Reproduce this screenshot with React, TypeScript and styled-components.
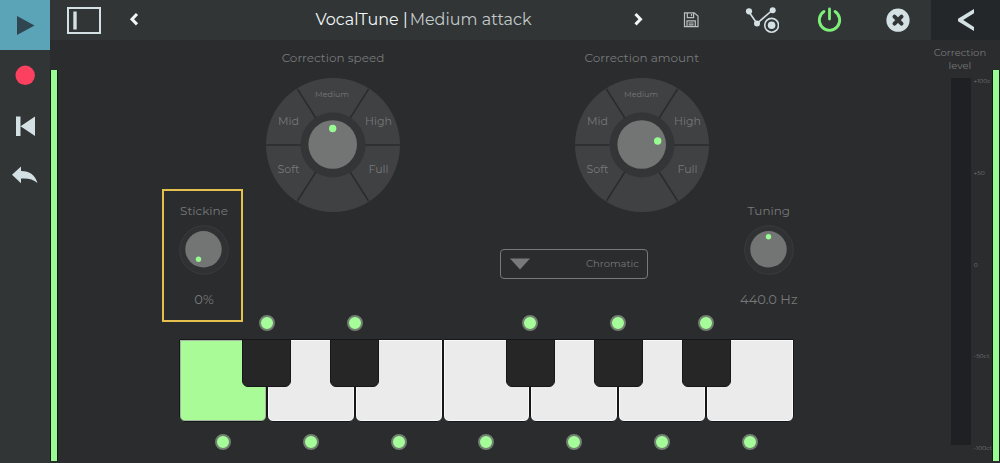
import React, { useState } from "react";
import styled, { createGlobalStyle } from "styled-components";

const GlobalStyle = createGlobalStyle`
  * { box-sizing: border-box; }
  body {
    margin: 0;
    background: #2b2c2e;
    color: #77797a;
    font-family: Montserrat, Inter, "Liberation Sans", sans-serif;
    font-size: 12px;
    line-height: 16px;
  }
  button, select, input { font: inherit; color: inherit; margin: 0; }
`;

const green = "#98fc92";
const pale = "#d3e0e4";

const Shell = styled.div`
  display: flex;
  min-height: 100vh;
`;

const Transport = styled.nav`
  display: flex;
  flex-direction: column;
  flex: 0 0 50px;
  background: #313536;
`;

const TransportButton = styled.button<{ $active?: boolean }>`
  display: flex;
  align-items: center;
  justify-content: center;
  height: 50px;
  padding: 0;
  border: 0;
  background: ${(p) => (p.$active ? "#5ba3b6" : "transparent")};
`;

const Device = styled.div`
  display: flex;
  flex: 1;
  flex-direction: column;
  min-width: 0;
`;

const Toolbar = styled.header`
  display: flex;
  height: 40px;
  background: #313536;
`;

const ToolButton = styled.button<{ $width: number; $dark?: boolean }>`
  display: flex;
  flex: 0 0 ${(p) => p.$width}px;
  align-items: center;
  justify-content: center;
  padding: 0;
  border: 0;
  background: ${(p) => (p.$dark ? "#242729" : "transparent")};
`;

const Title = styled.h1`
  flex: 1;
  margin: 0;
  padding-left: 75px;
  color: #c3cacb;
  font-size: 16px;
  font-weight: 400;
  line-height: 40px;
  text-align: center;
  white-space: nowrap;
`;

const PluginName = styled.span`
  margin-right: 2px;
  color: #f1f7f7;
`;

const Body = styled.div`
  display: flex;
  flex: 1;
`;

const MeterSlot = styled.div`
  display: flex;
  flex: 0 0 8px;
  padding: 30px 0 2px;
`;

const MeterBar = styled.div`
  flex: 1;
  border: solid #151617;
  border-width: 0 1px;
  background: ${green};
`;

const Panel = styled.main`
  display: flex;
  flex: 1;
  flex-direction: column;
  min-width: 0;
`;

const Controls = styled.section`
  display: flex;
  padding: 10px 107px 0 104px;
`;

const Middle = styled.div`
  display: flex;
  flex: 1;
  flex-direction: column;
  padding-bottom: 43px;
`;

const Dials = styled.div`
  display: flex;
  justify-content: space-between;
  padding: 0 18px 0 23px;
`;

const DialGroup = styled.div`
  display: flex;
  flex-direction: column;
  align-items: center;
  gap: 12px;
  width: 134px;
  white-space: nowrap;
`;

const SideControl = styled.div<{ $selected?: boolean }>`
  display: flex;
  flex: 0 0 81px;
  flex-direction: column;
  align-items: center;
  align-self: flex-end;
  padding: 12px 0 13px 3px;
  border: 2px solid ${(p) => (p.$selected ? "#e6c04c" : "transparent")};
  white-space: nowrap;
`;

const Readout = styled.output`
  margin-top: 16px;
  font-size: 13px;
`;

const KnobFrame = styled.div<{ $size: number; $top?: number }>`
  position: relative;
  width: ${(p) => p.$size}px;
  height: ${(p) => p.$size}px;
  margin-top: ${(p) => p.$top ?? 0}px;
  svg { display: block; }
`;

const KnobInput = styled.input`
  position: absolute;
  inset: 0;
  width: 100%;
  height: 100%;
  opacity: 0;
  cursor: pointer;
`;

const ScalePicker = styled.div`
  display: grid;
  align-self: flex-end;
  width: 148px;
  height: 30px;
  margin: 37px 79px 0 0;
  > * { grid-area: 1 / 1; }
  svg { align-self: center; margin-left: 10px; pointer-events: none; }
`;

const ScaleSelect = styled.select`
  width: 100%;
  padding: 0 8px 0 40px;
  border: 1px solid #77797a;
  border-radius: 4px;
  background: transparent;
  appearance: none;
  font-size: 10px;
  text-align-last: right;
`;

const Keyboard = styled.section`
  display: grid;
  grid-template-columns: repeat(14, 1fr);
  grid-template-rows: 16px 83px 16px;
  row-gap: 8px;
  margin-top: -7px;
  padding: 0 121px;
`;

const WhiteKey = styled.button<{ $slot: number; $held: boolean }>`
  grid-area: 2 / ${(p) => p.$slot} / auto / span 2;
  padding: 0;
  border: 1px solid #161718;
  border-radius: 0 0 6px 6px;
  background: ${(p) => (p.$held ? "#a9fb98" : "#ebebeb")};
  box-shadow: inset 0 0 0 1px ${(p) => (p.$held ? "#a5b5a2" : "#f8f8f8")};
`;

const BlackKey = styled.button<{ $slot: number }>`
  grid-area: 2 / ${(p) => p.$slot} / auto / span 2;
  justify-self: center;
  width: 49px;
  height: 48px;
  padding: 0;
  border: 1px solid #161718;
  border-radius: 0 0 6px 6px;
  background: #262626;
`;

const NoteToggle = styled.input<{ $slot: number; $row: number }>`
  grid-area: ${(p) => p.$row} / ${(p) => p.$slot} / auto / span 2;
  justify-self: center;
  width: 16px;
  height: 16px;
  margin-top: ${(p) => (p.$row === 3 ? 4 : 0)}px;
  border: 2px solid #718070;
  border-radius: 50%;
  background: #3a3c3e;
  appearance: none;
  &:checked { background: #a5fd99; }
`;

const Level = styled.aside`
  display: flex;
  flex: 0 0 77px;
  flex-direction: column;
  padding: 6px 0 12px;
`;

const LevelTitle = styled.h2`
  margin: 0 0 6px 13px;
  font-size: 10px;
  font-weight: 400;
  line-height: 13px;
  text-align: center;
`;

const LevelScale = styled.div`
  display: flex;
  flex: 1;
  gap: 3px;
  padding: 0 0 6px 36px;
`;

const LevelTrack = styled.div`
  flex: 0 0 20px;
  background: #1f2023;
`;

const Ticks = styled.div`
  display: flex;
  flex-direction: column;
  justify-content: space-between;
  margin-bottom: -6px;
  font-size: 6px;
  line-height: 6px;
  white-space: nowrap;
`;

function Dial({ id, label, x, y }: { id: string; label: string; x: number; y: number }) {
  return (
    <DialGroup>
      <label htmlFor={id}>{label}</label>
      <KnobFrame $size={134}>
        <svg width="134" height="134" viewBox="0 0 134 134" aria-hidden="true">
          <circle cx="67" cy="67" r="67" fill="#3f4143" />
          <path
            d="M0 67H134M31.4 11L102.6 123M102.6 11L31.4 123"
            stroke="#2a2b2d"
            strokeWidth="1.5"
          />
          <circle cx="67" cy="67" r="32.5" fill="#333537" />
          <circle cx="66.7" cy="66.5" r="24.3" fill="#737574" />
          <circle cx={66.7 + x} cy={66.5 + y} r="3.7" fill={green} />
          <g fill="#77797a" fontSize="11" textAnchor="middle">
            <text x="66" y="19" fontSize="8">Medium</text>
            <text x="22.5" y="47">Mid</text>
            <text x="112.5" y="47">High</text>
            <text x="22.5" y="95">Soft</text>
            <text x="112.5" y="95">Full</text>
          </g>
        </svg>
        <KnobInput id={id} type="range" />
      </KnobFrame>
    </DialGroup>
  );
}

function SmallKnob(props: {
  id: string; label: string; value: string; x: number; y: number; selected?: boolean;
}) {
  return (
    <SideControl $selected={props.selected}>
      <label htmlFor={props.id}>{props.label}</label>
      <KnobFrame $size={50} $top={6}>
        <svg width="50" height="50" viewBox="0 0 50 50" aria-hidden="true">
          <circle cx="25" cy="25" r="24.3" fill="#303133" stroke="#393b3c" />
          <circle cx="24.5" cy="24.3" r="18.2" fill="#737574" />
          <circle cx={24.5 + props.x} cy={24.3 + props.y} r="2.7" fill={green} />
        </svg>
        <KnobInput id={props.id} type="range" />
      </KnobFrame>
      <Readout htmlFor={props.id}>{props.value}</Readout>
    </SideControl>
  );
}

const whiteNotes = ["C", "D", "E", "F", "G", "A", "B"];
const blackNotes = [
  { name: "C sharp", slot: 2 },
  { name: "D sharp", slot: 4 },
  { name: "F sharp", slot: 8 },
  { name: "G sharp", slot: 10 },
  { name: "A sharp", slot: 12 },
];

export default function App() {
  const [root, setRoot] = useState("C");

  return (
    <Shell>
      <GlobalStyle />
      <Transport aria-label="Transport">
        <TransportButton $active aria-label="Play">
          <svg width="50" height="50"><path d="M17 16L34.5 25.5L17 35Z" fill="#2f4550" /></svg>
        </TransportButton>
        <TransportButton aria-label="Record">
          <svg width="50" height="50"><circle cx="25.2" cy="25.3" r="9.7" fill="#fb4060" /></svg>
        </TransportButton>
        <TransportButton aria-label="Back to start">
          <svg width="50" height="50"><path d="M16 16.5H20.5V36H16ZM35 16.5V36L20.5 26.3Z" fill={pale} /></svg>
        </TransportButton>
        <TransportButton aria-label="Undo">
          <svg width="50" height="50">
            <path d="M12 24.8L21 16.5V21C30 21 35 25 37.5 33C33 29 28 28 21 28.5V33.3Z" fill={pale} />
          </svg>
        </TransportButton>
      </Transport>

      <Device>
        <Toolbar>
          <ToolButton $width={68} aria-label="Toggle browser">
            <svg width="34" height="28" fill="none" stroke={pale}>
              <rect x="1" y="2" width="32" height="25" strokeWidth="2" />
              <path d="M8 5.5V23.5" strokeWidth="3.4" />
            </svg>
          </ToolButton>
          <ToolButton $width={32} aria-label="Previous preset">
            <svg width="12" height="16" fill="none" stroke="#f1f7f7" strokeWidth="3">
              <path d="M9 2L4 7.2L9 12.4" />
            </svg>
          </ToolButton>
          <Title><PluginName>VocalTune |</PluginName>Medium attack</Title>
          <ToolButton $width={32} aria-label="Next preset">
            <svg width="12" height="16" fill="none" stroke="#f1f7f7" strokeWidth="3">
              <path d="M3.5 2L8.5 7.2L3.5 12.4" />
            </svg>
          </ToolButton>
          <ToolButton $width={74} aria-label="Save preset">
            <svg width="16" height="18" fill="none" stroke="#b9c0c1" strokeWidth="1.2">
              <path d="M1.5 1.8H11.2L15 5V15.6H1.5Z" />
              <path d="M4.3 2V6.6H10.6V2M8.5 3V5.2M4 15.4V9.8H12.3V15.4M5.6 12H10.6M5.6 13.8H10.6" />
            </svg>
          </ToolButton>
          <ToolButton $width={68} aria-label="Automation">
            <svg width="34" height="28" fill="none" stroke={pale} strokeWidth="1.6">
              <path d="M4 6L12 17.5L27 4.5" />
              <g fill={pale} stroke="none">
                <circle cx="4" cy="5.3" r="3.1" />
                <circle cx="12" cy="17.5" r="3" />
                <circle cx="27.7" cy="4.3" r="3" />
              </g>
              <circle cx="26.6" cy="19.3" r="8.4" fill="#313536" stroke="none" />
              <circle cx="26.6" cy="19.3" r="6.9" />
              <circle cx="26.6" cy="19.3" r="3.8" fill={pale} stroke="none" />
            </svg>
          </ToolButton>
          <ToolButton $width={68} aria-label="Power">
            <svg width="26" height="28" fill="none" stroke="#7ef078" strokeWidth="2.8" strokeLinecap="round">
              <path d="M7 5.5A10.2 10.2 0 1 0 18 5.5M12.5 3V13" />
            </svg>
          </ToolButton>
          <ToolButton $width={67} aria-label="Close">
            <svg width="24" height="24">
              <circle cx="12" cy="12.2" r="11.6" fill={pale} />
              <path
                d="M8.5 8.7L15.5 15.7M15.5 8.7L8.5 15.7"
                stroke="#313536"
                strokeWidth="4"
                strokeLinecap="round"
              />
            </svg>
          </ToolButton>
          <ToolButton $width={69} $dark aria-label="Collapse">
            <svg width="18" height="24">
              <path d="M17 1V5.2L6.2 12L17 18.9V23L1 13.2V10.8Z" fill={pale} />
            </svg>
          </ToolButton>
        </Toolbar>

        <Body>
          <MeterSlot><MeterBar /></MeterSlot>

          <Panel>
            <Controls>
              <SmallKnob id="stickiness" label="Stickine" value="0%" x={-5} y={10} selected />
              <Middle>
                <Dials>
                  <Dial id="speed" label="Correction speed" x={0} y={-16} />
                  <Dial id="amount" label="Correction amount" x={16} y={-3.5} />
                </Dials>
                <ScalePicker>
                  <ScaleSelect aria-label="Scale" defaultValue="Chromatic">
                    <option>Chromatic</option>
                    <option>Major</option>
                    <option>Minor</option>
                  </ScaleSelect>
                  <svg width="20" height="12"><path d="M0 0.5H20L10 11.5Z" fill="#77797a" /></svg>
                </ScalePicker>
              </Middle>
              <SmallKnob id="tuning" label="Tuning" value="440.0 Hz" x={0} y={-12.5} />
            </Controls>

            <Keyboard aria-label="Notes">
              {whiteNotes.map((note, i) => (
                <React.Fragment key={note}>
                  <WhiteKey
                    $slot={i * 2 + 1}
                    $held={root === note}
                    aria-label={note}
                    onClick={() => setRoot(note)}
                  />
                  <NoteToggle type="checkbox" $row={3} $slot={i * 2 + 1} defaultChecked aria-label={`Use ${note}`} />
                </React.Fragment>
              ))}
              {blackNotes.map(({ name, slot }) => (
                <React.Fragment key={name}>
                  <BlackKey $slot={slot} aria-label={name} onClick={() => setRoot(name)} />
                  <NoteToggle type="checkbox" $row={1} $slot={slot} defaultChecked aria-label={`Use ${name}`} />
                </React.Fragment>
              ))}
            </Keyboard>
          </Panel>

          <Level>
            <LevelTitle>Correction level</LevelTitle>
            <LevelScale>
              <LevelTrack />
              <Ticks>
                <span>+100c</span>
                <span>+50</span>
                <span>0</span>
                <span>-50ct</span>
                <span>-100ct</span>
              </Ticks>
            </LevelScale>
          </Level>

          <MeterSlot><MeterBar /></MeterSlot>
        </Body>
      </Device>
    </Shell>
  );
}
